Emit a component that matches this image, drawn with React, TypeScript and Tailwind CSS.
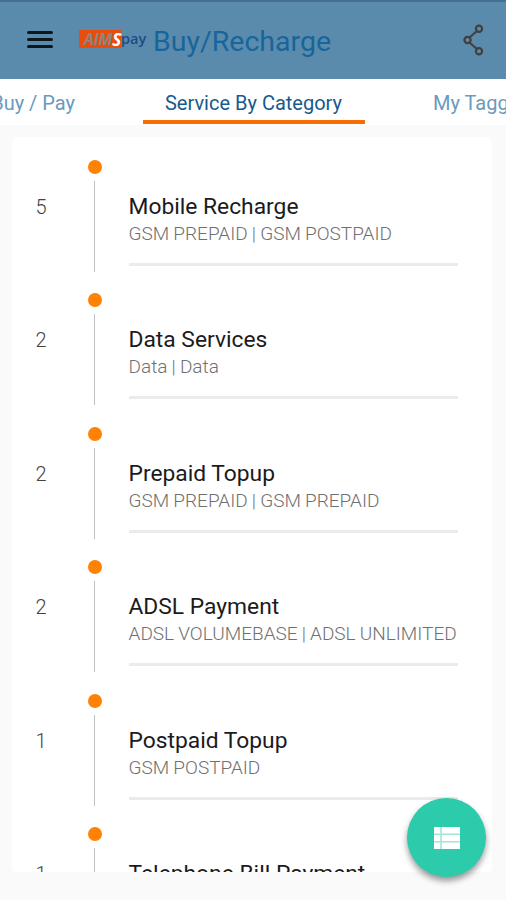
const categories = [
  { count: 5, name: 'Mobile Recharge', detail: 'GSM PREPAID | GSM POSTPAID' },
  { count: 2, name: 'Data Services', detail: 'Data | Data' },
  { count: 2, name: 'Prepaid Topup', detail: 'GSM PREPAID | GSM PREPAID' },
  { count: 2, name: 'ADSL Payment', detail: 'ADSL VOLUMEBASE | ADSL UNLIMITED' },
  { count: 1, name: 'Postpaid Topup', detail: 'GSM POSTPAID' },
  { count: 1, name: 'Telephone Bill Payment', detail: 'PSTN' },
];

function Logo() {
  return (
    <div className="flex h-[18px] w-[68px] shrink-0 items-center font-['Open_Sans',sans-serif] font-bold leading-none">
      <span className="flex h-[18px] w-[42px] items-center justify-end whitespace-nowrap bg-[#e84d0e] text-[16px] tracking-[-0.3px] text-[#8c8580]">
        <span className="italic">AIM</span>
        <span className="text-[17px] italic text-white">S</span>
      </span>
      <span className="text-[14.5px] font-semibold text-[#1c4d86]">pay</span>
    </div>
  );
}

function Header() {
  return (
    <header className="flex h-[79px] items-center border-t-2 border-[#47708e] bg-[#5b8bac] pl-[27px] pr-[22px]">
      <div className="flex w-[26px] flex-col gap-[4.5px] pb-[2px]">
        <span className="h-[2.5px] rounded bg-[#0d171e]" />
        <span className="h-[2.5px] rounded bg-[#0d171e]" />
        <span className="h-[2.5px] rounded bg-[#0d171e]" />
      </div>
      <div className="ml-[26px] pb-[3px]"><Logo /></div>
      <h1 className="ml-[6px] whitespace-nowrap pt-[3px] text-[28.5px] leading-none text-[#17659b]">Buy/Recharge</h1>
      <svg className="mb-[2px] ml-auto" width="21" height="32" viewBox="0 0 21 32" fill="none" stroke="#423f3e" strokeWidth="2.2">
        <path d="M6.5 13.5 14 7M6.5 18.5 14 25" />
        <circle cx="4.5" cy="16" r="3.1" />
        <circle cx="16" cy="4.8" r="3.1" />
        <circle cx="16" cy="27.2" r="3.1" />
      </svg>
    </header>
  );
}

function Tabs() {
  return (
    <nav className="flex h-[46px] justify-center overflow-hidden whitespace-nowrap bg-white pl-[2px] text-[20px] leading-[48px] text-[#6a9abc]">
      <span className="mr-[68px] w-[90px] shrink-0 text-right">Buy / Pay</span>
      <span className="mr-[68px] h-[45px] w-[222px] shrink-0 border-b-[4px] border-[#f96c02] pr-[1px] text-center text-[#165a8e]">
        Service By Category
      </span>
      <span className="w-[90px] shrink-0">My Tagged</span>
    </nav>
  );
}

function CategoryRow({ count, name, detail }: (typeof categories)[number]) {
  return (
    <li className="flex h-[133.6px] shrink-0">
      <span className="w-[75.5px] pl-[23.5px] pt-[34px] text-[20px] font-light leading-[26px] text-[#444]">{count}</span>
      <div className="flex w-[14px] flex-col items-center">
        <span className="size-[14px] rounded-full bg-[#ff8205]" />
        <span className="mt-[7px] h-[91px] w-[1.5px] bg-[#c0c0c0]" />
      </div>
      <div className="ml-[27px] mt-[33px] h-[73px] w-[329.5px] whitespace-nowrap border-b-[3px] border-[#ebebeb]">
        <div className="text-[22.8px] leading-[28px] text-[#1b1b1b]">{name}</div>
        <div className="text-[19px] font-light leading-[26px] text-[#707070] [word-spacing:-0.5px]">{detail}</div>
      </div>
    </li>
  );
}

export default function App() {
  return (
    <div className="relative h-[900px] w-[506px] overflow-hidden bg-[#fafafa] font-[Roboto,sans-serif]">
      <Header />
      <Tabs />
      <main className="ml-[12px] mt-[12px] h-[735px] w-[480px] overflow-hidden rounded-[5px] bg-white pt-[22.5px]">
        <ul className="flex flex-col">
          {categories.map((category) => (
            <CategoryRow key={category.name} {...category} />
          ))}
        </ul>
      </main>
      <button className="absolute left-[407px] top-[798px] flex size-[79px] items-center justify-center rounded-full bg-[#2bcbab] shadow-[0_4px_6px_rgba(0,0,0,0.4)]">
        <svg width="26" height="22" viewBox="0 0 26 22">
          <path fill="#fff" d="M0 0h26v22H0z" />
          <path stroke="#a2e6d8" strokeWidth="1.6" d="M0 7.3h26M0 14.7h26M7 0v22" />
        </svg>
      </button>
    </div>
  );
}
